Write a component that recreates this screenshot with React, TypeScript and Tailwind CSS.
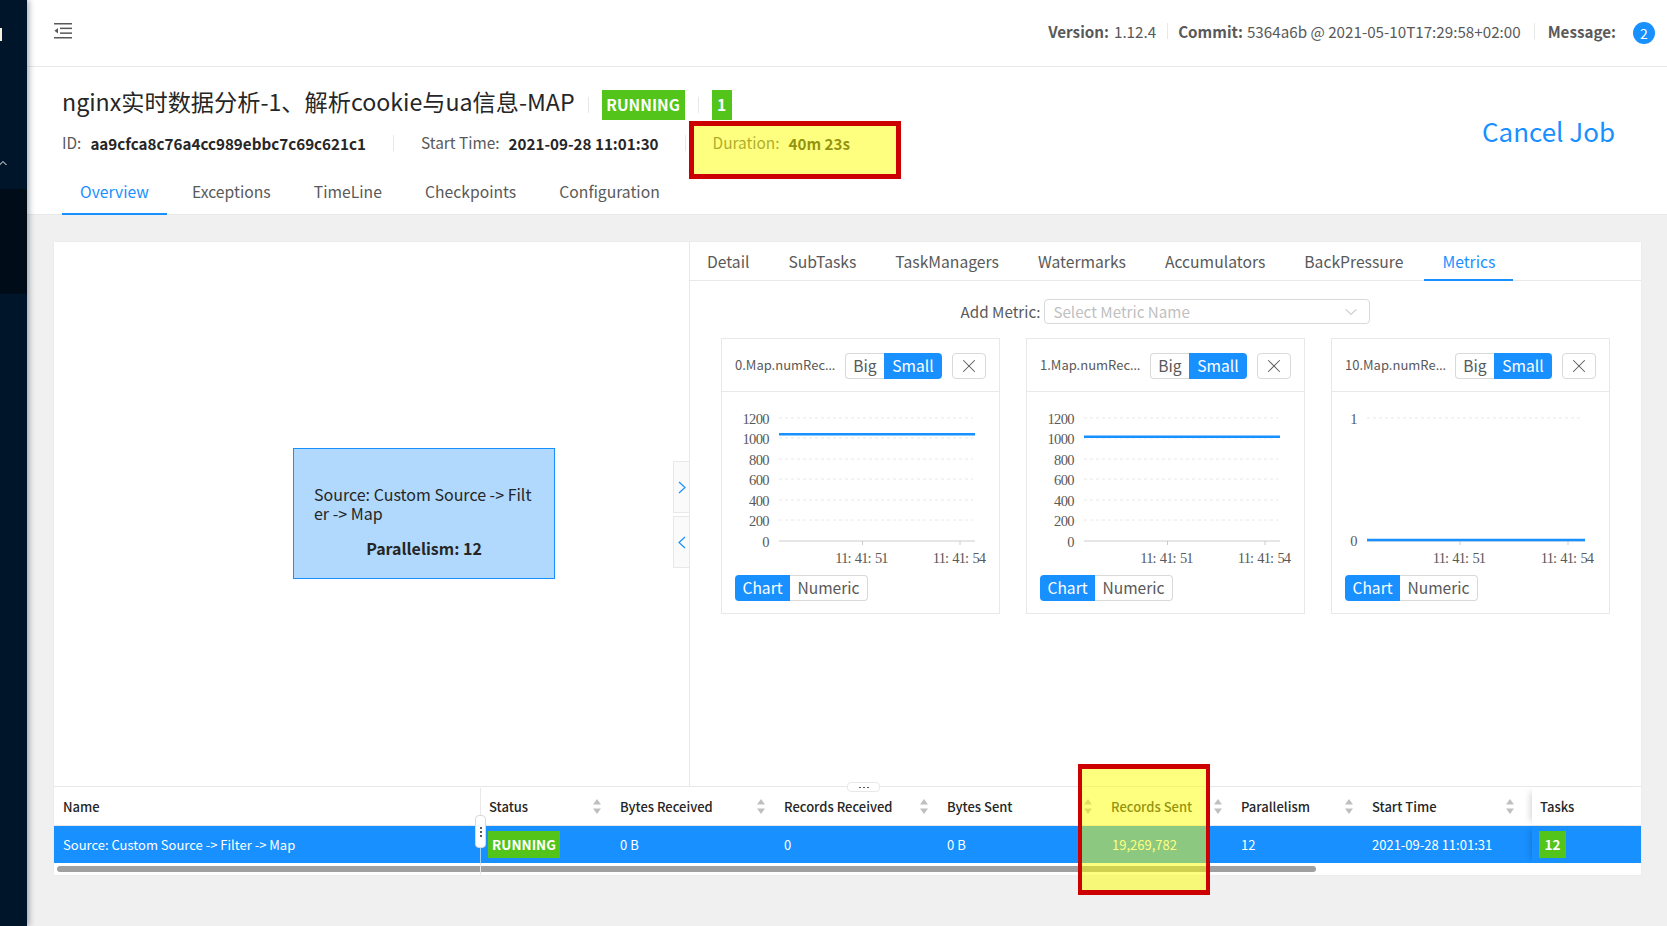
import React from "react";
import { ChevronDown, X } from "lucide-react";

const FONT = "font-['Noto_Sans_CJK_SC','Noto_Sans',sans-serif]";

const JOB_TABS = ["Overview", "Exceptions", "TimeLine", "Checkpoints", "Configuration"];
const VERTEX_TABS = ["Detail", "SubTasks", "TaskManagers", "Watermarks", "Accumulators", "BackPressure", "Metrics"];

const Divider = ({ className = "" }: { className?: string }) => (
  <span className={`inline-block w-px h-[16px] bg-[#e8e8e8] ${className}`} />
);

const Sorter = () => (
  <svg width="10" height="15" viewBox="0 0 10 15" className="shrink-0">
    <path d="M5 0 L9 5.5 L1 5.5 Z M5 15 L9 9.5 L1 9.5 Z" fill="#bfbfbf" />
  </svg>
);

const Badge = ({ children, className = "" }: { children: React.ReactNode; className?: string }) => (
  <span className={`flex items-center justify-center bg-[#52c41a] text-white font-bold ${className}`}>{children}</span>
);

const Chevron = ({ d }: { d: string }) => (
  <svg width="10" height="13" viewBox="0 0 10 13">
    <path d={d} fill="none" stroke="#1890ff" strokeWidth="1.2" />
  </svg>
);

interface ChartProps {
  left: number;
  right: number;
  ticks: { label: string; y: number }[];
  lineY: number;
  marks: number[];
}

// the axes are a drawing, so they stay in one svg per card
const Chart = ({ left, right, ticks, lineY, marks }: ChartProps) => (
  <svg width="277" height="160" viewBox="0 0 277 160" className="block">
    {ticks.map((t) => (
      <g key={t.label}>
        <text
          x={left - 10}
          y={t.y + 6}
          textAnchor="end"
          fontSize="14.5"
          letterSpacing="-0.6"
          fill="#595959"
          fontFamily="'Liberation Serif', serif"
        >
          {t.label}
        </text>
        {t.label !== "0" && (
          <line x1={left} x2={right - 2} y1={t.y} y2={t.y} stroke="#e8e8e8" strokeDasharray="3 3" />
        )}
      </g>
    ))}
    <line x1={left} x2={right} y1={135} y2={135} stroke="#cccccc" />
    {marks.map((m, i) => (
      <g key={m}>
        <line x1={m} x2={m} y1={135} y2={139} stroke="#cccccc" />
        <text
          x={m - 1}
          y={157}
          textAnchor="middle"
          fontSize="14.5"
          letterSpacing="-0.9"
          wordSpacing="1.5"
          fill="#595959"
          fontFamily="'Liberation Serif', serif"
        >
          {i === 0 ? "11: 41: 51" : "11: 41: 54"}
        </text>
      </g>
    ))}
    <line x1={left} x2={right} y1={lineY} y2={lineY} stroke="#1890ff" strokeWidth="2.5" />
  </svg>
);

const LARGE_TICKS = [
  { label: "1200", y: 12 },
  { label: "1000", y: 32 },
  { label: "800", y: 53 },
  { label: "600", y: 73 },
  { label: "400", y: 94 },
  { label: "200", y: 114 },
  { label: "0", y: 135 },
];

const MetricCard = ({ title, chart }: { title: string; chart: ChartProps }) => (
  <div className="w-[279px] h-[276px] border border-[#e8e8e8] flex flex-col">
    <div className="h-[53px] shrink-0 border-b border-[#e8e8e8] flex items-center pt-[1px] pl-[13px] pr-[13px]">
      <span className="w-[109px] whitespace-nowrap text-[13px] text-[#595959]">
        {title}
        <span className="font-['Noto_Sans',sans-serif]">…</span>
      </span>
      <div className="flex h-[26px] text-[15.6px] ml-[1px]">
        <span className="w-[39px] border border-[#d9d9d9] border-r-0 rounded-l flex items-center justify-center text-[#595959]">
          Big
        </span>
        <span className="w-[58px] bg-[#1890ff] rounded-r flex items-center justify-center text-white">Small</span>
      </div>
      <span className="ml-auto w-[34px] h-[26px] border border-[#d9d9d9] rounded flex items-center justify-center text-[#595959]">
        <X size={22} strokeWidth={1.1} />
      </span>
    </div>
    <div className="mt-[14px] h-[160px]">
      <Chart {...chart} />
    </div>
    <div className="flex h-[26px] text-[15.6px] ml-[13px] mt-[9px] w-fit">
      <span className="w-[55px] bg-[#1890ff] rounded-l flex items-center justify-center text-white">Chart</span>
      <span className="w-[78px] border border-[#d9d9d9] border-l-0 rounded-r flex items-center justify-center text-[#595959]">
        Numeric
      </span>
    </div>
  </div>
);

const COLS = "grid grid-cols-[427px_131px_164px_163px_164px_130px_131px_168px_109px]";

const HeadCell = ({ label, className = "" }: { label: string; className?: string }) => (
  <div className={`pl-[8px] pr-[10px] flex items-center justify-between ${className}`}>
    <span>{label}</span>
    <Sorter />
  </div>
);

export default function App() {
  return (
    <div className={`relative flex h-[926px] w-full overflow-hidden bg-[#f0f0f0] ${FONT}`}>
      <aside className="relative w-[27px] shrink-0 bg-[#001529] shadow-[2px_0_6px_rgba(0,21,41,0.35)] z-10 flex flex-col overflow-hidden">
        <div className="mt-[28px] w-[2px] h-[13px] bg-[#f5f0e0]" />
        <svg width="8" height="6" viewBox="0 0 8 6" className="mt-[119px] -ml-[1px]">
          <path d="M0.5 5 L4 1.5 L7.5 5" fill="none" stroke="#ffffff" strokeWidth="1" />
        </svg>
        <div className="mt-[23px] h-[105px] bg-[#000c17]" />
      </aside>

      <main className="flex-1 min-w-0 flex flex-col">
        <header className="h-[67px] shrink-0 bg-white border-b border-[#e8e8e8] shadow-[0_1px_4px_rgba(0,21,41,0.08)] flex items-center pb-[4px] pl-[27px] pr-[12px] text-[15.2px] text-[#595959]">
          <svg width="18" height="16" viewBox="0 0 18 16" fill="#595959">
            <rect x="0" y="0" width="18" height="1.5" />
            <rect x="6" y="4.6" width="12" height="1.5" />
            <rect x="6" y="9.4" width="12" height="1.5" />
            <rect x="0" y="14" width="18" height="1.5" />
            <path d="M0.5 7.7 L4 5 L4 10.4 Z" />
          </svg>
          <div className="ml-auto flex items-center">
            <b className="font-bold">Version:</b>
            <span className="ml-[5px]">1.12.4</span>
            <Divider className="ml-[11px] mr-[10px]" />
            <b className="font-bold">Commit:</b>
            <span className="ml-[4px]">5364a6b @ 2021-05-10T17:29:58+02:00</span>
            <Divider className="mx-[13px]" />
            <b className="font-bold">Message:</b>
            <span className="ml-[17px] mt-[4px] w-[22px] h-[22px] rounded-full bg-[#1890ff] text-white text-[14px] flex items-center justify-center">
              2
            </span>
          </div>
        </header>

        <section className="relative h-[148px] shrink-0 bg-white border-b border-[#e8e8e8] pl-[35px] pr-[25px] flex flex-col">
          <div className="flex items-center h-[30px] mt-[23px]">
            <h1 className="text-[23.2px] font-normal text-[#262626] leading-none -mt-[6px]">
              nginx实时数据分析-1、解析cookie与ua信息-MAP
            </h1>
            <Divider className="ml-[13px] mr-[13px]" />
            <Badge className="w-[83px] h-[30px] text-[15.6px]">RUNNING</Badge>
            <Divider className="ml-[13px] mr-[13px]" />
            <Badge className="w-[20px] h-[30px] text-[15.6px]">1</Badge>
          </div>
          <div className="flex items-center h-[24px] mt-[11px] text-[15.4px] text-[#595959]">
            <span>ID:</span>
            <span className="ml-[9px] text-[15.2px] font-bold text-[#262626]">aa9cfca8c76a4cc989ebbc7c69c621c1</span>
            <Divider className="ml-[27px] mr-[27px]" />
            <span>Start Time:</span>
            <span className="ml-[9px] text-[15.2px] font-bold text-[#262626]">2021-09-28 11:01:30</span>
            <Divider className="ml-[26px] mr-[27px]" />
            <span>Duration:</span>
            <span className="ml-[9px] text-[15.2px] font-bold text-[#262626]">40m 23s</span>
          </div>
          <span className="absolute right-[52px] top-[46px] text-[26px] leading-[36px] text-[#1890ff]">Cancel Job</span>
          <nav className="mt-auto flex h-[46px] -mb-px text-[15.7px] text-[#595959]">
            {JOB_TABS.map((tab, i) => (
              <span
                key={tab}
                className={`flex items-center pt-[2px] px-[18px] mr-[7.2px] border-b-2 ${
                  i === 0 ? "border-[#1890ff] text-[#1890ff]" : "border-transparent"
                }`}
              >
                {tab}
              </span>
            ))}
          </nav>
        </section>

        <div className="pt-[27px] pl-[27px] pr-[26px]">
          <div className="h-[633px] bg-white shadow-[0_0_1px_rgba(0,0,0,0.1)] flex flex-col">
            <div className="h-[545px] shrink-0 flex border-b border-[#e8e8e8]">
              <div className="relative w-[636px] shrink-0 border-r border-[#e8e8e8]">
                {/* node of the job graph, its place on the canvas is the content */}
                <div className="absolute left-[239px] top-[206px] w-[262px] h-[131px] bg-[#b0d9fd] border border-[#1890ff] pt-[36px] px-[20px] text-[16px] leading-[19px] text-[#262626] break-all">
                  <p>Source: Custom Source -&gt; Filter -&gt; Map</p>
                  <p className="mt-[16px] text-center font-bold">Parallelism: 12</p>
                </div>
                <span className="absolute right-0 top-[219px] w-[16px] h-[52px] bg-[#fafafa] border border-r-0 border-[#e8e8e8] flex items-center justify-center">
                  <Chevron d="M2 1 L8 6.5 L2 12" />
                </span>
                <span className="absolute right-0 top-[274px] w-[16px] h-[52px] bg-[#fafafa] border border-r-0 border-[#e8e8e8] flex items-center justify-center">
                  <Chevron d="M8 1 L2 6.5 L8 12" />
                </span>
              </div>

              <div className="flex-1 min-w-0 flex flex-col">
                <nav className="h-[39px] shrink-0 flex border-b border-[#e8e8e8] -ml-px text-[15.7px] text-[#595959]">
                  {VERTEX_TABS.map((tab) => (
                    <span
                      key={tab}
                      className={`flex items-center pt-[3px] px-[18px] mr-[3px] -mb-px border-b-2 ${
                        tab === "Metrics" ? "border-[#1890ff] text-[#1890ff]" : "border-transparent"
                      }`}
                    >
                      {tab}
                    </span>
                  ))}
                </nav>
                <div className="flex justify-center items-center mt-[18px] text-[15.2px] text-[#595959]">
                  <span className="mr-[4px]">Add Metric:</span>
                  <div className="w-[326px] h-[25px] border border-[#d9d9d9] rounded flex items-center justify-between pl-[8px] pr-[8px] text-[#bfbfbf]">
                    <span>Select Metric Name</span>
                    <ChevronDown size={20} strokeWidth={1.1} className="text-[#a6a6a6]" />
                  </div>
                </div>
                <div className="flex gap-[26px] mt-[14px] pl-[31px]">
                  <MetricCard
                    title="0.Map.numRec"
                    chart={{ left: 57, right: 253, ticks: LARGE_TICKS, lineY: 28.3, marks: [140.5, 238] }}
                  />
                  <MetricCard
                    title="1.Map.numRec"
                    chart={{ left: 57, right: 253, ticks: LARGE_TICKS, lineY: 30.7, marks: [140.5, 238] }}
                  />
                  <MetricCard
                    title="10.Map.numRe"
                    chart={{
                      left: 35,
                      right: 253,
                      ticks: [
                        { label: "1", y: 12 },
                        { label: "0", y: 134 },
                      ],
                      lineY: 134,
                      marks: [128, 236],
                    }}
                  />
                </div>
              </div>
            </div>

            <div className="relative text-[13px] text-[#262626]">
              <div className={`${COLS} h-[39px] pt-[1px] border-b border-[#e8e8e8] font-medium`}>
                <div className="pl-[9px] flex items-center border-r border-[#e8e8e8]">Name</div>
                <HeadCell label="Status" />
                <HeadCell label="Bytes Received" />
                <HeadCell label="Records Received" />
                <HeadCell label="Bytes Sent" />
                <HeadCell label="Records Sent" />
                <HeadCell label="Parallelism" />
                <HeadCell label="Start Time" className="pr-[17px]" />
                <div className="pl-[8px] flex items-center shadow-[-6px_0_6px_-4px_rgba(0,0,0,0.15)]">Tasks</div>
              </div>
              <div className={`${COLS} h-[37px] bg-[#1890ff] text-white`}>
                <div className="pl-[9px] flex items-center border-r border-white/60">
                  Source: Custom Source -&gt; Filter -&gt; Map
                </div>
                <div className="pl-[7px] flex items-center">
                  <Badge className="w-[72px] h-[27px] text-[13.5px]">RUNNING</Badge>
                </div>
                <div className="pl-[8px] flex items-center">0 B</div>
                <div className="pl-[8px] flex items-center">0</div>
                <div className="pl-[8px] flex items-center">0 B</div>
                <div className="pl-[9px] flex items-center">19,269,782</div>
                <div className="pl-[8px] flex items-center">12</div>
                <div className="pl-[8px] flex items-center">2021-09-28 11:01:31</div>
                <div className="pl-[7px] flex items-center shadow-[-6px_0_6px_-4px_rgba(0,0,0,0.15)]">
                  <Badge className="w-[27px] h-[27px] text-[13.5px]">12</Badge>
                </div>
              </div>
              <div className="relative h-[12px] pt-[3px] pl-[3px]">
                <div className="w-[1259px] h-[6px] rounded-full bg-[#a0a0a0]" />
                <span className="absolute left-[426px] top-0 w-px h-full bg-[#e8e8e8]" />
              </div>
              {/* drag handles sit over the table border */}
              <span className="absolute left-[421px] top-[28px] w-[11px] h-[33px] bg-white border border-[#d9d9d9] rounded-sm flex flex-col items-center justify-center gap-[2px]">
                <i className="w-[2px] h-[2px] bg-[#595959]" />
                <i className="w-[2px] h-[2px] bg-[#595959]" />
                <i className="w-[2px] h-[2px] bg-[#595959]" />
              </span>
              <span className="absolute left-[793px] -top-[5px] w-[33px] h-[10px] bg-white border border-[#e8e8e8] rounded-sm flex items-center justify-center gap-[2px]">
                <i className="w-[2px] h-[1px] bg-[#595959]" />
                <i className="w-[2px] h-[1px] bg-[#595959]" />
                <i className="w-[2px] h-[1px] bg-[#595959]" />
              </span>
            </div>
          </div>
        </div>
      </main>

      {/* the red and yellow marks someone put on the screenshot */}
      <div className="absolute left-[689px] top-[121px] w-[212px] h-[58px] border-[5px] border-[#cc0000] bg-[#ffff00]/50" />
      <div className="absolute left-[1078px] top-[764px] w-[132px] h-[131px] border-x-[4px] border-y-[5px] border-[#cc0000] bg-[#ffff00]/50" />
    </div>
  );
}
